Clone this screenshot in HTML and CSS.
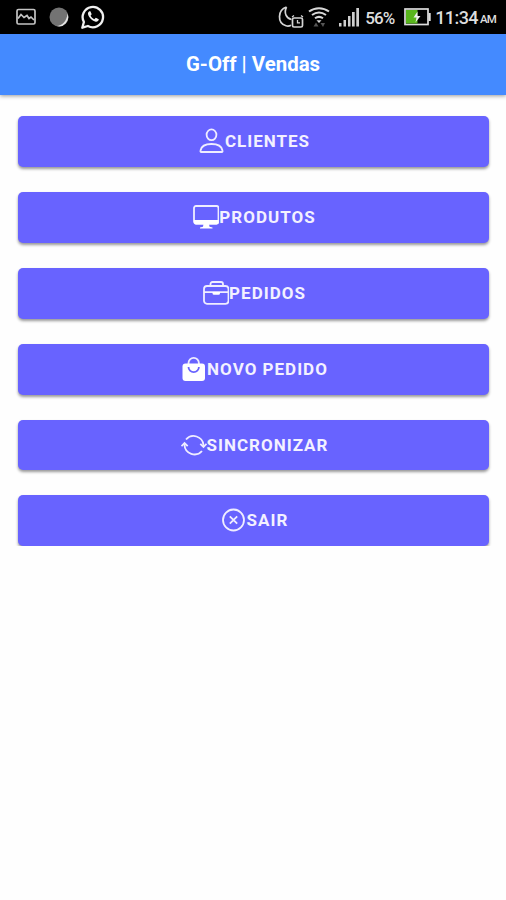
FILE: index.html
```
<!DOCTYPE html>
<html lang="pt-BR">
<head>
  <meta charset="UTF-8">
  <title>G-Off | Vendas</title>
  <link rel="stylesheet" href="styles.css">
</head>
<body>

  <div class="status-bar">
    <svg class="s-photo" width="20" height="18" viewBox="0 0 20 18" fill="none" stroke="#c4c4c4" stroke-width="1.7">
      <rect x="1" y="1.500" width="18" height="14.500" rx="1.500"/>
      <path d="M2 10.500l3-4 3 3 3-2 2 3 2-1.500 3 3"/>
    </svg>
    <svg class="s-moon" width="20" height="20" viewBox="0 0 20 20">
      <circle cx="10" cy="10" r="9.500" fill="#737373"/>
      <path d="M18.500 6.500a9.300 9.300 0 0 1-11 12.500c5.500 0 10.500-5 11-12.500z" fill="#e4e4e4"/>
    </svg>
    <svg class="s-whats" width="24" height="24" viewBox="0 0 24 24">
      <path d="M1.300 22.700l1.600-5.700a10.200 10.200 0 1 1 4 4z" fill="none" stroke="#f0f0f0" stroke-width="2.300" stroke-linejoin="round"/>
      <path d="M8.300 6.300c-1.800 1-1.700 3.200-.2 5.500 1.700 2.600 4 4.500 6.600 4.900 1.700.2 3-.9 3.100-2.400l-3-1.600-1.500 1.500c-1.700-.7-3-2-3.700-3.600l1.100-1.300-1.300-3z" fill="#f0f0f0"/>
    </svg>

    <span class="spacer"></span>

    <svg class="s-sleep" width="26" height="24" viewBox="0 0 26 24" fill="none" stroke="#d4d4d4" stroke-width="1.700">
      <path d="M8.500 2C-.5 5-1 18 8 20.800c2 .6 3.500.3 5-.5M8.500 2c-3 6 0 11.500 5 12.500"/>
      <rect x="14.500" y="13" width="10" height="9" rx="1.500"/>
      <path d="M14 12l2-1.500M25 12l-2-1.500M19.500 15v2.800h2.500" stroke-width="1.300"/>
    </svg>
    <svg class="s-wifi" width="22" height="22" viewBox="0 0 22 22" fill="none" stroke="#d8d8d8" stroke-width="2">
      <path d="M1 5.500c6-4.500 14-4.500 20 0M4 9c4.500-3.200 9.500-3.200 14 0M7 12.300c2.500-1.800 5.500-1.800 8 0"/>
      <path d="M8.500 14.200h5L11 17z" fill="#d8d8d8" stroke="none"/>
      <path d="M5.500 20.500l2.500-4 2.500 4zM12.500 17l2.500 4 2-4z" fill="#555" stroke="none"/>
    </svg>
    <svg class="s-signal" width="21" height="19" viewBox="0 0 21 19" fill="#cfcfcf">
      <rect x="0" y="15" width="2.500" height="3.500"/>
      <rect x="4.500" y="12" width="2.500" height="6.500"/>
      <rect x="9" y="8" width="2.500" height="10.500"/>
      <rect x="13" y="4" width="2.700" height="14.500"/>
      <rect x="17.300" y="0" width="2.700" height="18.500"/>
    </svg>
    <span class="percent">56%</span>
    <svg class="s-battery" width="27" height="18" viewBox="0 0 27 18">
      <rect x="1" y="1" width="23" height="15.500" fill="#000" stroke="#ddd" stroke-width="1.700"/>
      <rect x="2" y="2" width="11.500" height="13.500" fill="#58b51c"/>
      <rect x="24.500" y="5" width="2.200" height="8" fill="#ddd"/>
      <path d="M13.500 3.500L9.500 9.500h3l-1 5 5-6.500h-3z" fill="#eee"/>
    </svg>
    <span class="clock">11:34</span><span class="ampm">AM</span>
  </div>

  <header class="toolbar">
    <h1>G-Off | Vendas</h1>
  </header>

  <main class="menu">
    <button class="btn">
      <svg class="icon" viewBox="0 0 26 26">
        <ellipse cx="12.500" cy="6.800" rx="4.900" ry="5.400"/>
        <path d="M2.300 24c-.8 0-1-.7-.8-1.500.8-4.300 5.200-6.500 11-6.500s10.200 2.200 11 6.500c.2.800 0 1.500-.8 1.500z"/>
      </svg>
      CLIENTES
    </button>
    <button class="btn">
      <svg class="icon" viewBox="0 0 26 26">
        <rect x="1" y="2" width="24.500" height="17.500" rx="2"/>
        <path class="solid" d="M1 16h24.500v2.500a2 2 0 0 1-2 2H3a2 2 0 0 1-2-2zM10.500 20h5.500l.5 2.800 3 .7v1H7v-1l3-.7z"/>
      </svg>
      PRODUTOS
    </button>
    <button class="btn">
      <svg class="icon" viewBox="0 0 26 26">
        <rect x="1" y="6" width="24.500" height="17.800" rx="3"/>
        <path d="M7.500 6V4a2 2 0 0 1 2-2H18a2 2 0 0 1 2 2v2M1 12.200h24.500"/>
        <path class="solid" d="M9.500 12h7.500v1.200a1.500 1.500 0 0 1-1.500 1.500H11a1.500 1.500 0 0 1-1.500-1.500z"/>
      </svg>
      PEDIDOS
    </button>
    <button class="btn">
      <svg class="icon" viewBox="0 0 26 26">
        <path d="M7.500 9V7a5.200 5.200 0 0 1 10.400 0v2"/>
        <rect class="solid" x="1.500" y="7.500" width="22.500" height="17.500" rx="3"/>
        <path class="handle" d="M7.500 11a5.200 5.200 0 0 0 10.400 0"/>
      </svg>
      NOVO PEDIDO
    </button>
    <button class="btn">
      <svg class="icon" viewBox="0 0 26 26">
        <path d="M5 7.500a10 10 0 0 1 17.500 5.500v1.500M21 19A10 10 0 0 1 3.500 13v-1.500"/>
        <path d="M.5 14.200l3-3.200 3.200 3.200M19.300 11.800l3.200 3.200 3-3.200"/>
      </svg>
      SINCRONIZAR
    </button>
    <button class="btn">
      <svg class="icon" viewBox="0 0 26 26">
        <circle cx="12.500" cy="13" r="10.500"/>
        <path d="M8.800 9.300l7.400 7.400M16.200 9.300l-7.400 7.400"/>
      </svg>
      SAIR
    </button>
  </main>

</body>
</html>
```

FILE: styles.css
```
body {
  margin: 0;
  background: #fefefe;
  font-family: Roboto, sans-serif;
}

/* phone status bar */
.status-bar {
  display: flex;
  align-items: center;
  height: 34px;
  box-sizing: border-box;
  padding: 0 10px 0 16px;
  background: #000;
  color: #dedede;
}
.status-bar svg { flex: none; }
.spacer { flex: 1; }
.s-moon { margin-left: 13px; }
.s-whats { margin-left: 12px; }
.s-wifi { margin-left: 4px; }
.s-signal { margin-left: 9px; }
.percent {
  width: 30px;
  margin: 1px 0 0 5px;
  font-size: 17px;
  font-weight: 500;
  letter-spacing: -0.9px;
}
.s-battery { margin-left: 9px; }
.clock {
  margin-left: 4px;
  font-size: 18px;
  font-weight: 500;
  letter-spacing: -0.6px;
}
.ampm {
  margin: 4px 0 0 2px;
  font-size: 11.5px;
  font-weight: 500;
  letter-spacing: -0.8px;
}

.toolbar {
  display: flex;
  align-items: center;
  justify-content: center;
  height: 61px;
  background: #448aff;
  box-shadow: 0 1px 4px rgba(0, 0, 0, 0.4);
}
.toolbar h1 {
  margin: 0 0 1px;
  color: #fff;
  font-size: 20.4px;
  font-weight: 700;
}

.menu {
  display: flex;
  flex-direction: column;
  gap: 25px;
  padding: 21px 17px 0 18px;
}
.btn {
  display: flex;
  align-items: center;
  justify-content: center;
  height: 50.9px;
  padding: 0 0 1px 2px;
  border: none;
  border-radius: 5px;
  background: #6863ff;
  box-shadow: 0 2px 3px rgba(0, 0, 0, 0.4);
  color: #f3f1ff;
  font-family: inherit;
  font-size: 17px;
  font-weight: 700;
  letter-spacing: 1px;
}
.icon {
  flex: none;
  width: 26px;
  height: 26px;
  fill: none;
  stroke: #efedff;
  stroke-width: 1.8;
}
.icon .solid {
  fill: #fff;
  stroke: none;
}
.icon .handle { stroke: #6863ff; }
```
